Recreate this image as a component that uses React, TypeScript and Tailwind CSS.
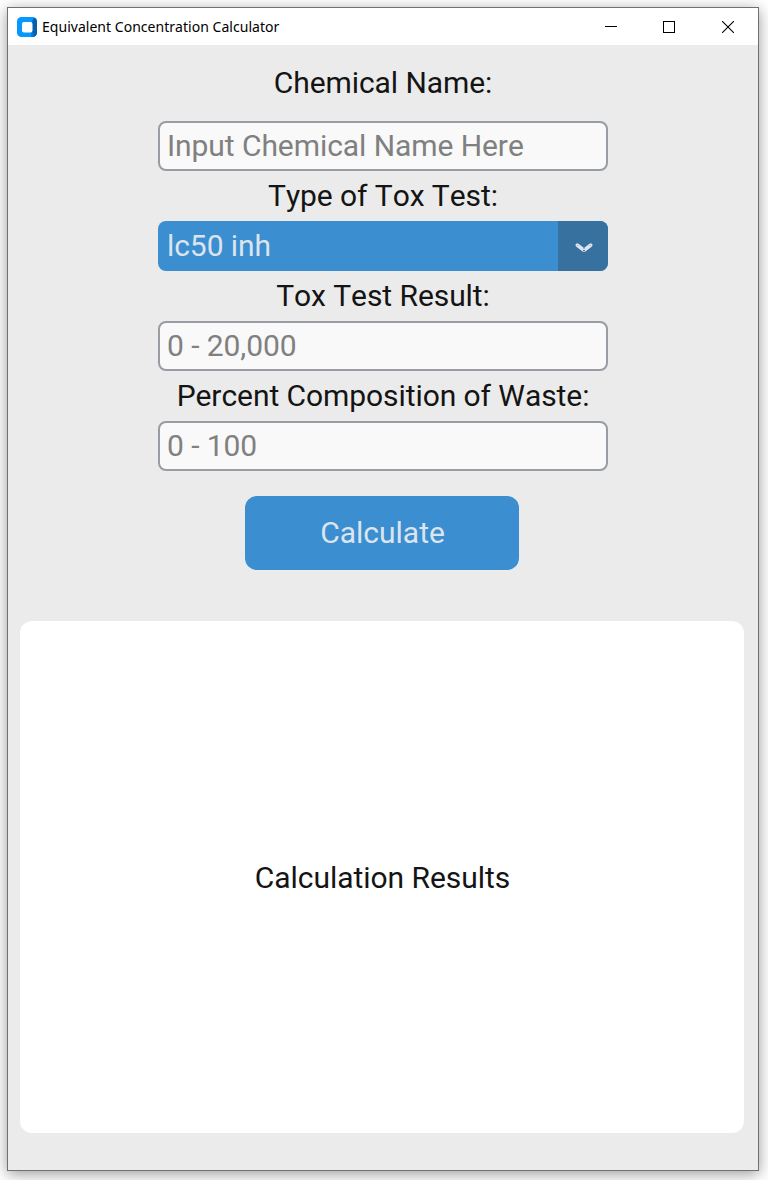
import type { ReactNode } from "react";

function AppIcon() {
  return (
    <svg width="20" height="20" viewBox="0 0 20 20">
      <rect width="20" height="20" rx="4.5" fill="#0698ff" />
      <path d="M15 5.5 16 2 17.5 0.8A4.5 4.5 0 0 1 20 4.5v11a4.5 4.5 0 0 1-4 4.5l-1-5.5z" fill="#0560ae" />
      <path d="M14.5 14.5 17 16.5 16 20l-2-.3z" fill="#0878d2" />
      <rect x="5" y="5" width="10.5" height="10.5" rx="2" fill="#fff" />
    </svg>
  );
}

function TitleBar() {
  return (
    <header className="flex h-[37px] shrink-0 items-center bg-white pl-[9px]">
      <AppIcon />
      <span className="ml-[5px] grow font-['Noto_Sans','Open_Sans',sans-serif] text-[14px] tracking-[0.03px] text-black">
        Equivalent Concentration Calculator
      </span>
      <div className="flex">
        <button aria-label="Minimize" className="flex h-[37px] w-[58px] items-center justify-center">
          <svg width="12" height="12" shapeRendering="crispEdges">
            <path d="M0 5.5h12" stroke="#000" />
          </svg>
        </button>
        <button aria-label="Maximize" className="flex h-[37px] w-[58px] items-center justify-center">
          <svg width="12" height="12" shapeRendering="crispEdges">
            <rect x="0.5" y="0.5" width="11" height="11" fill="none" stroke="#000" />
          </svg>
        </button>
        <button aria-label="Close" className="flex h-[37px] w-[60px] items-center justify-center">
          <svg width="12" height="12">
            <path d="M0 0l12 12M12 0L0 12" stroke="#000" strokeWidth="1.1" />
          </svg>
        </button>
      </div>
    </header>
  );
}

function Label({ children }: { children: ReactNode }) {
  return (
    <div className="flex h-[50px] items-center justify-center whitespace-nowrap text-[#141414]">{children}</div>
  );
}

function Field({ placeholder }: { placeholder: string }) {
  return (
    <input
      type="text"
      placeholder={placeholder}
      className="block h-[50px] w-full rounded-[8px] border-2 border-[#979da2] bg-[#f9f9fa] px-[7px] pb-px tracking-[-0.07px] outline-none placeholder:text-[#808080]"
    />
  );
}

export default function App() {
  return (
    <div className="h-[1180px] w-[768px] overflow-hidden bg-white pt-[7px] pl-[7px] font-['Roboto',sans-serif] text-[30px] leading-[36px] [font-kerning:none]">
      <div className="flex h-[1164px] w-[752px] flex-col border border-[#707070] bg-[#ebebeb] shadow-[0_3px_14px_rgba(0,0,0,0.4)]">
        <TitleBar />
        <main className="flex grow flex-col items-center">
          <div className="mt-[13px] w-[450px] tracking-[-0.07px]">
            <Label>Chemical Name:</Label>
            <div className="h-[13px]" />
            <Field placeholder="Input Chemical Name Here" />
            <Label>Type of Tox Test:</Label>
            <button className="flex h-[50px] w-full overflow-hidden rounded-[8px] bg-[#3b8ed0] text-left text-[#dce4ee]">
              <span className="flex h-full w-[400px] items-center pl-[9px]">lc50 inh</span>
              <span className="flex h-full w-[50px] items-center justify-center bg-[#36719f] pt-[3px] pl-px">
                <svg width="18" height="10" viewBox="0 0 18 10" fill="none">
                  <path d="M2.4 2.2 9 7.2 15.6 2.2" stroke="#dce4ee" strokeWidth="3.6" strokeLinecap="round" strokeLinejoin="round" />
                  <circle cx="2.8" cy="2.5" r="0.4" fill="#36719f" />
                  <circle cx="15.2" cy="2.5" r="0.4" fill="#36719f" />
                  <circle cx="9" cy="7.6" r="0.9" fill="#36719f" />
                  <path d="M8.5 4.6h1v1.2h-1z" fill="#36719f" />
                </svg>
              </span>
            </button>
            <Label>Tox Test Result:</Label>
            <Field placeholder="0 - 20,000" />
            <Label>Percent Composition of Waste:</Label>
            <Field placeholder="0 - 100" />
          </div>
          <button className="mt-[25px] mr-[2px] h-[74px] w-[274px] rounded-[12px] bg-[#3b8ed0] pl-px text-[#dce4ee]">
            Calculate
          </button>
          <section className="mt-[51px] mr-[2px] flex h-[512px] w-[724px] items-center justify-center rounded-[12px] bg-white pt-[2px] pl-px tracking-[-0.05px] text-[#141414]">
            Calculation Results
          </section>
        </main>
      </div>
    </div>
  );
}
